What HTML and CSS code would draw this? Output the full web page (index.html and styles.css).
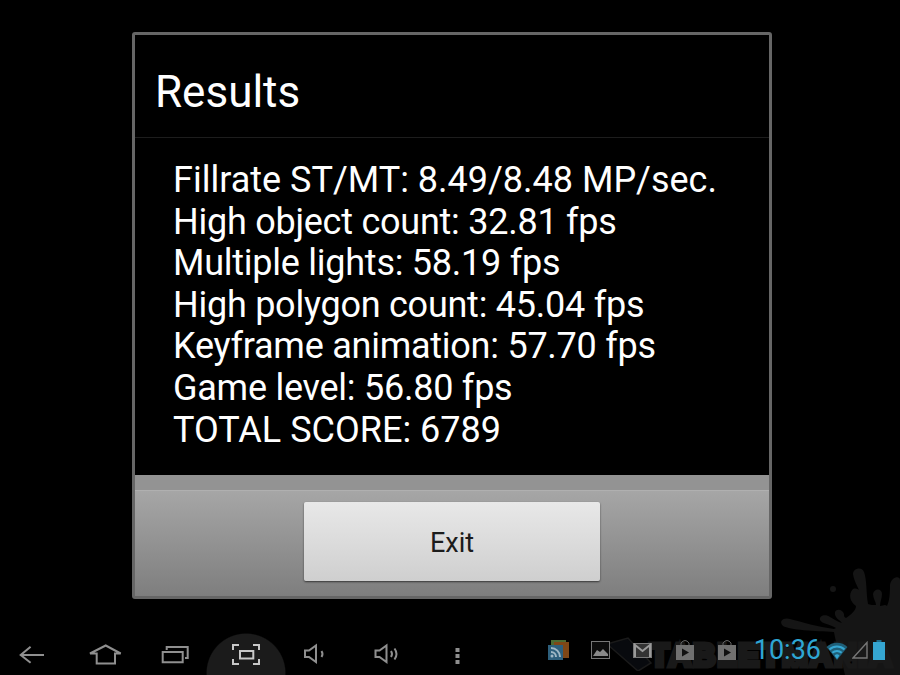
FILE: index.html
```html
<!DOCTYPE html>
<html lang="en">
<head>
  <meta charset="UTF-8">
  <title>Results</title>
  <link rel="stylesheet" href="styles.css">
</head>
<body>
  <div class="dialog">
    <h1 class="dialog-title">Results</h1>
    <div class="dialog-body">
      <p>Fillrate ST/MT: 8.49/8.48 MP/sec.</p>
      <p class="tight">High object count: 32.81 fps</p>
      <p class="tight">Multiple lights: 58.19 fps</p>
      <p class="tight">High polygon count: 45.04 fps</p>
      <p class="tight">Keyframe animation: 57.70 fps</p>
      <p class="tight">Game level: 56.80 fps</p>
      <p>TOTAL SCORE: 6789</p>
    </div>
    <div class="dialog-strip"></div>
    <div class="dialog-footer">
      <button class="exit-btn">Exit</button>
    </div>
  </div>

  <!-- site watermark sits behind the status icons -->
  <div class="watermark">
    <svg class="wm-tablet" width="46" height="40" viewBox="0 0 46 40">
      <path d="M1 13 L22 7 L45 32 L32 40 Z" fill="#080a0e" stroke="#1a1a1a" stroke-width="1.5" />
    </svg>
    <svg class="splat" width="130" height="115" viewBox="0 0 130 115">
      <circle cx="63" cy="29" r="3" />
      <path d="M75 115 C72 100 66 85 64 72 C45 71 20 70 13 66 C8 61 14 57 20 59 C32 62 48 67 64 69 L66 68 C60 64 52 64 50 60 C49 55 56 54 60 57 C64 59 68 62 72 63 C70 60 64 58 65 52 C67 48 73 50 74 54 C74 56 74 57 76 58 C82 54 86 50 86 46 C80 42 78 34 83 29 C88 27 92 32 91 36 C90 30 84 22 83 14 C83 8 92 6 94 12 C97 20 96 32 98 44 C100 45 103 45 106 45 C106 42 103 38 103 34 C104 28 112 28 112 34 C112 38 110 42 110 46 C113 46 115 44 117 46 C120 40 120 30 120 25 C121 17 130 15 130 20 V115 Z" />
    </svg>
    <span class="watermark-text">TABLETMANIA</span>
  </div>

  <div class="bar">
    <div class="nav-buttons">
      <svg class="nav-icon" viewBox="0 0 40 50"><path d="M18.6 21.7 L8.7 30 L18.6 37.7 M8.7 30 H32" /></svg>
      <svg class="nav-icon" viewBox="0 0 40 50"><path d="M7 28.5 L22.7 20.5 L37.7 28.5 H32 V38.5 H13.7 V28.5 Z" /></svg>
      <svg class="nav-icon" viewBox="0 0 40 50"><path d="M8.7 27 H28.7 V37.3 H8.7 Z M12.7 25 V22 H33.7 V33 H31" /></svg>
      <svg class="nav-icon nav-icon-on" viewBox="0 0 40 50"><path d="M14 20 H8 V25 M28 20 H34 V25 M8 34 V39 H14 M34 34 V39 H28" /><path d="M15 26 H28.3 V33.5 H15 Z" /></svg>
      <svg class="nav-icon" viewBox="0 0 40 50"><path d="M9 25.5 H13 L20 20.5 V37 L13 32 H9 Z M25.5 26 Q27.5 29 25.5 32" /></svg>
      <svg class="nav-icon" viewBox="0 0 40 50"><path d="M8.5 25.5 H12.5 L19.5 20.5 V37 L12.5 32 H8.5 Z M24 26 Q26 29 24 32 M27.5 23.5 Q31.5 29 27.5 34.5" /></svg>
      <svg class="nav-icon nav-icon-dots" viewBox="0 0 40 50"><path d="M17.5 23 h4 v4 h-4 Z M17.5 29 h4 v4 h-4 Z M17.5 35 h4 v4 h-4 Z" /></svg>
    </div>

    <div class="status">
      <svg class="st-rss" width="22" height="21" viewBox="0 0 22 21">
        <rect x="3" y="0" width="15" height="15" fill="#4b6b32" />
        <rect x="6" y="2" width="15" height="16" fill="#7f4716" />
        <rect x="0" y="5" width="15" height="15" fill="#2d5f7c" />
        <path d="M3 8 A9 9 0 0 1 12 17 M3 12 A5 5 0 0 1 8 17" fill="none" stroke="#9fb8c6" stroke-width="2" />
        <circle cx="4" cy="16" r="1.5" fill="#9fb8c6" />
      </svg>
      <svg class="st-pic" width="19" height="18" viewBox="0 0 19 18">
        <rect x="0.5" y="0.5" width="18" height="17" fill="#0c0c0c" stroke="#777" />
        <path d="M2 15 L6 9 L9 11 L12 8 L17 13 V15 Z" fill="#8a8a8a" />
      </svg>
      <svg class="st-mail" width="19" height="15" viewBox="0 0 19 15">
        <rect x="0.5" y="0.5" width="18" height="14" fill="#333" stroke="#777" />
        <path d="M2 14 V2 L9.5 8 L17 2 V14" fill="none" stroke="#9a9a9a" stroke-width="2" />
      </svg>
      <svg class="st-bag" width="18" height="20" viewBox="0 0 18 20">
        <path d="M5 6 V3 Q9 -2 13 3 V6" fill="none" stroke="#666" />
        <rect x="0" y="5" width="18" height="15" fill="#707070" />
        <path d="M6 8.5 L13 12.5 L6 16.5 Z" fill="#111" />
      </svg>
      <svg class="st-bag st-bag-2" width="18" height="20" viewBox="0 0 18 20">
        <path d="M5 6 V3 Q9 -2 13 3 V6" fill="none" stroke="#666" />
        <rect x="0" y="5" width="18" height="15" fill="#707070" />
        <path d="M6 8.5 L13 12.5 L6 16.5 Z" fill="#111" />
      </svg>
      <span class="clock">10:36</span>
      <svg class="st-wifi" width="22" height="20" viewBox="0 0 22 20">
        <path d="M0.5 7 A15 15 0 0 1 21.5 7 L11 20 Z" fill="#1f5f78" />
        <path d="M3.5 9.5 A11 11 0 0 1 18.5 9.5 M6.3 12.8 A7 7 0 0 1 15.7 12.8" fill="none" stroke="#35a6d2" stroke-width="2" />
        <path d="M8.6 15.5 A3.5 3.5 0 0 1 13.4 15.5 L11 19 Z" fill="#35a6d2" />
      </svg>
      <svg class="st-signal" width="16" height="18" viewBox="0 0 16 18">
        <path d="M1 17 L15 1.5 V17 Z" fill="none" stroke="#777" stroke-width="1.4" />
      </svg>
      <svg class="st-batt" width="12" height="20" viewBox="0 0 12 20">
        <rect x="3.5" y="0" width="5" height="3" fill="#1f6d8c" />
        <rect x="0" y="2" width="12" height="18" fill="#35a6d2" />
      </svg>
    </div>
  </div>
</body>
</html>
```

FILE: styles.css
```css
html, body {
  margin: 0;
  padding: 0;
}

body {
  position: relative;
  width: 900px;
  height: 675px;
  overflow: hidden;
  background-color: #000;
  font-family: Roboto, "Liberation Sans", sans-serif;
  color: #fff;
}

.dialog {
  box-sizing: border-box;
  display: flex;
  flex-direction: column;
  width: 640px;
  height: 567px;
  margin: 32px 0 0 132px;
  border: 3px solid #666;
  border-radius: 3px;
}

.dialog-title {
  box-sizing: border-box;
  height: 103px;
  margin: 0;
  padding: 33px 0 0 20px;
  font-size: 44px;
  line-height: 48px;
  font-weight: 400;
  border-bottom: 1px solid #1d1d1d;
}

.dialog-body {
  box-sizing: border-box;
  height: 337px;
  padding: 22px 0 0 38px;
  font-size: 36px;
  line-height: 41.6px;
}

.dialog-body p {
  margin: 0;
}

.dialog-body .tight {
  letter-spacing: -0.25px;
}

.dialog-strip {
  height: 15px;
  background-color: #939393;
  border-bottom: 1px solid #b0b0b0;
}

.dialog-footer {
  flex: 1;
  display: flex;
  justify-content: center;
  padding-top: 11px;
  background: linear-gradient(#a6a6a6, #7e7e7e);
}

.exit-btn {
  width: 296px;
  height: 79px;
  padding: 2px 0 0;
  border: none;
  border-radius: 2px;
  background: linear-gradient(#e8e8e8, #cfcfcf);
  box-shadow: 0 1px 2px rgba(0, 0, 0, 0.6);
  font-family: inherit;
  font-size: 27px;
  color: #1c1c1c;
}

.bar {
  display: flex;
  justify-content: space-between;
  position: absolute;
  left: 0;
  top: 625px;
  width: 900px;
  height: 50px;
  background: radial-gradient(circle 40px at 246px 48px, #1b1b1b 97%, transparent);
}

.nav-buttons {
  display: flex;
  gap: 31px;
  padding-left: 12px;
}

.nav-icon {
  width: 40px;
  height: 50px;
  fill: none;
  stroke: #8f8f8f;
  stroke-width: 2;
}

.nav-icon-on {
  stroke: #c8c8c8;
}

.nav-icon-dots {
  fill: #8f8f8f;
  stroke: none;
}

.status {
  display: flex;
  align-items: center;
  height: 50px;
  padding-right: 15px;
}

.st-pic { margin-left: 21px; }
.st-mail { margin-left: 23px; }
.st-bag { margin-left: 24px; }
.st-bag-2 { margin-left: 24px; }

.clock {
  margin-left: 18px;
  font-size: 27px;
  font-weight: 400;
  color: #2ea6d4;
}

.st-wifi { margin-left: 5px; }
.st-signal { margin-left: 4px; }
.st-batt { margin-left: 5px; }

.watermark {
  position: absolute;
  left: 600px;
  top: 560px;
  width: 300px;
  height: 115px;
}

.wm-tablet {
  position: absolute;
  left: 6px;
  top: 71px;
}

.splat {
  position: absolute;
  right: 0;
  top: 0;
  fill: #151515;
}

.watermark-text {
  position: absolute;
  left: 50px;
  top: 78px;
  font-family: "Liberation Sans", sans-serif;
  font-size: 31px;
  font-weight: 700;
  letter-spacing: 2px;
  line-height: 36px;
  white-space: nowrap;
  color: #000;
  -webkit-text-stroke: 5px #191919;
}
```
